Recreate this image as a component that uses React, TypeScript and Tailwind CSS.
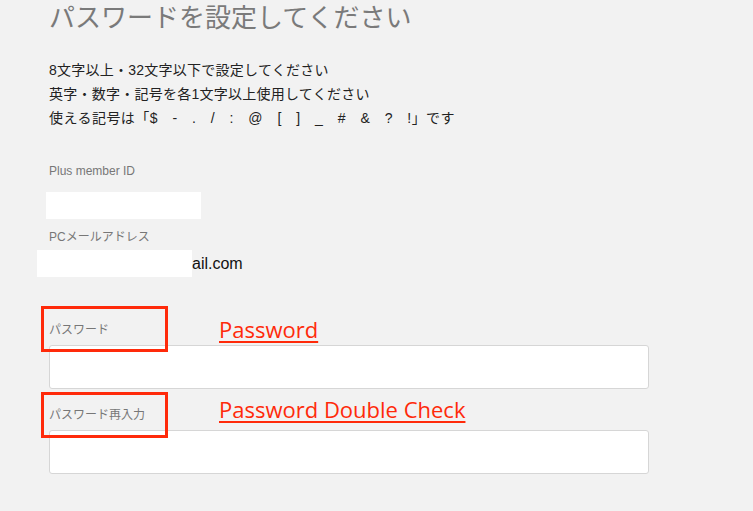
import React from 'react';

const jp = { fontFamily: '"Liberation Sans", "Noto Sans CJK JP", sans-serif' };

function Note({ children, className }: { children: React.ReactNode; className: string }) {
  return (
    <span
      className={`absolute text-[22px] leading-none text-[#ff2a0a] underline decoration-2 underline-offset-[3px] ${className}`}
      style={{ fontFamily: '"Open Sans", sans-serif' }}
    >
      {children}
    </span>
  );
}

export default function App() {
  return (
    <div className="relative min-h-[511px] w-[753px] overflow-hidden bg-[#f2f2f2]" style={jp}>
      <div className="pl-[49px]">
        <h1 className="pt-[1px] text-[26px] leading-[34px] text-[#7a7a7a]">パスワードを設定してください</h1>

        <div className="mt-[23px] text-[14px] leading-[24px] tracking-[0.25px] text-[#222]">
          <p>8文字以上・32文字以下で設定してください</p>
          <p>英字・数字・記号を各1文字以上使用してください</p>
          <p className="tracking-[0.45px]">使える記号は「$　-　.　/　:　@　[　]　_　#　&amp;　?　!」です</p>
        </div>

        <div className="mt-[33px] text-[12px] leading-[16px] text-[#777]">Plus member ID</div>
        <div className="ml-[-3px] mt-[13px] h-[27px] w-[155px] bg-white" />

        <div className="mt-[10px] text-[12px] leading-[16px] text-[#777]">PCメールアドレス</div>
        <div className="ml-[-12px] mt-[5px] flex items-center">
          <div className="h-[27px] w-[155px] bg-white" />
          <span className="text-[16px] leading-none text-[#111]">ail.com</span>
        </div>

        <div className="mt-[46px] text-[12px] leading-[14px] text-[#777]">パスワード</div>
        <div className="mt-[8px] h-[44px] w-[600px] rounded-[3px] border border-[#d6d6d6] bg-white" />

        <div className="mt-[19px] text-[12px] leading-[14px] text-[#777]">パスワード再入力</div>
        <div className="mt-[8px] h-[44px] w-[600px] rounded-[3px] border border-[#d6d6d6] bg-white" />
      </div>

      <div className="absolute left-[41px] top-[306px] h-[46px] w-[127px] border-[3px] border-[#ff2a0a]" />
      <div className="absolute left-[41px] top-[392px] h-[46px] w-[127px] border-[3px] border-[#ff2a0a]" />
      <Note className="left-[219px] top-[318px]">Password</Note>
      <Note className="left-[219px] top-[398px]">Password Double Check</Note>
    </div>
  );
}
